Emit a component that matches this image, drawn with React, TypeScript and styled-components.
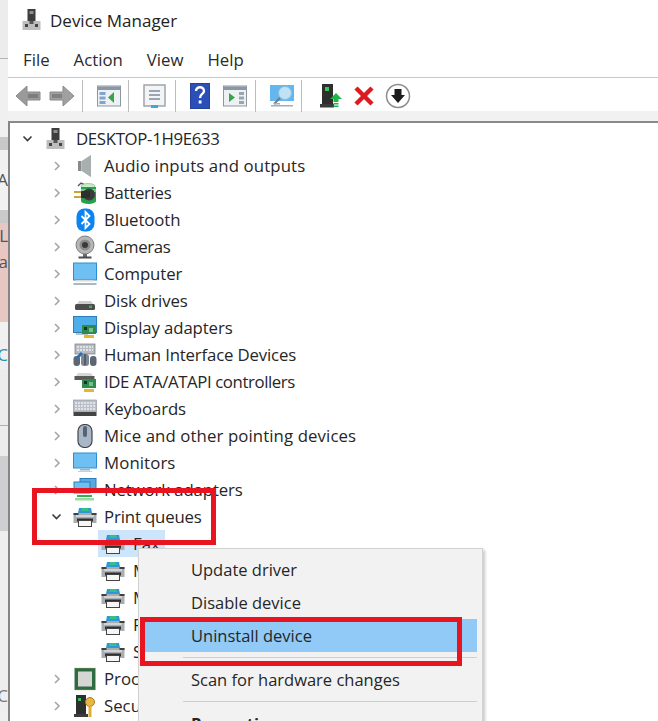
import React from "react";
import styled, { createGlobalStyle } from "styled-components";

const Global = createGlobalStyle`
  html, body { margin: 0; padding: 0; width: 658px; height: 721px; overflow: hidden; background: #fff; }
  body { font-family: "Open Sans", "Noto Sans", "Liberation Sans", sans-serif; color: #1c1c1c; }
  #root { width: 658px; height: 721px; }
  svg { filter: blur(0.3px); }
`;

const Page = styled.div`
  display: flex;
  width: 658px;
  height: 721px;
  overflow: hidden;
  position: relative;
  background: #fff;
`;

const LeftStrip = styled.div`
  width: 8px;
  flex: none;
  display: flex;
  flex-direction: column;
  background: #efefef;
  overflow: hidden;
`;

const StripBand = styled.div<{ $h: number; $bg?: string; $color?: string }>`
  height: ${(p) => p.$h}px;
  flex: none;
  background: ${(p) => p.$bg || "#efefef"};
  color: ${(p) => p.$color || "#555"};
  font-size: 17px;
  line-height: ${(p) => p.$h}px;
  white-space: nowrap;
  overflow: hidden;
  direction: rtl;
`;

const Win = styled.div`
  flex: 1;
  min-width: 0;
  display: flex;
  flex-direction: column;
`;

const TitleBar = styled.div`
  height: 40px;
  flex: none;
  display: flex;
  align-items: center;
  gap: 6px;
  padding: 0 0 0 12px;
  font-size: 17px;
  color: #222;
`;

const MenuBar = styled.div`
  height: 37px;
  box-sizing: content-box;
  flex: none;
  display: flex;
  align-items: center;
  gap: 24px;
  padding: 0 0 0 15px;
  font-size: 16.8px;
  color: #2a2a2a;
  border-bottom: 1px solid #c9c9c9;
  & > span { position: relative; top: 1px; }
`;

const Toolbar = styled.div`
  height: 43px;
  flex: none;
  display: flex;
  align-items: center;
  background: linear-gradient(#ffffff 0 76%, #f1f1f1 76%);
`;

const ToolGroup = styled.div<{ $gap?: number; $pl: number; $pr: number }>`
  display: flex;
  align-items: center;
  gap: ${(p) => p.$gap ?? 9}px;
  height: 32px;
  margin-top: -8px;
  padding: 0 ${(p) => p.$pr}px 0 ${(p) => p.$pl}px;
  & + & { border-left: 1px solid #bdbdbd; }
`;

const TreePane = styled.div`
  flex: 1;
  min-height: 0;
  border-left: 2px solid #858585;
  border-top: 2px solid #8a8a8a;
  overflow: hidden;
  padding-top: 2px;
`;

const Row = styled.div<{ $level: number }>`
  height: 27px;
  display: flex;
  align-items: center;
  padding-left: ${(p) => (p.$level === 0 ? 12 : p.$level === 1 ? 41 : 90)}px;
  font-size: 16.8px;
  white-space: nowrap;
  color: #262626;
`;

const Label = styled.span<{ $track?: number }>`
  letter-spacing: ${(p) => p.$track ?? 0}px;
`;

const Chevron = styled.span`
  width: 11px;
  height: 12px;
  flex: none;
  display: flex;
  align-items: center;
  justify-content: center;
`;

const IconSlot = styled.span<{ $level: number }>`
  width: 26px;
  height: 24px;
  flex: none;
  margin-left: ${(p) => (p.$level === 2 ? 0 : 10)}px;
  margin-right: ${(p) => (p.$level === 1 ? 6 : 7)}px;
  display: flex;
  align-items: center;
  justify-content: center;
`;

const Selected = styled.span`
  display: flex;
  align-items: center;
  height: 27px;
  margin-left: -2px;
  padding: 0 5px 0 2px;
  background: #cce5fb;
`;

const ContextMenu = styled.div`
  position: absolute;
  left: 138px;
  top: 548px;
  width: 345px;
  height: 190px;
  box-sizing: border-box;
  background: #f2f2f2;
  border: 1px solid #d2d2d2;
  box-shadow: 2px 2px 3px rgba(0, 0, 0, 0.22);
  padding: 4px 5px 0 6px;
  font-size: 16.5px;
  color: #262626;
`;

const MenuItem = styled.div<{ $active?: boolean; $bold?: boolean }>`
  height: 33px;
  line-height: 33px;
  padding-left: 46px;
  white-space: nowrap;
  background: ${(p) => (p.$active ? "#91c9f7" : "transparent")};
  font-weight: ${(p) => (p.$bold ? 700 : 400)};
`;

const MenuSep = styled.div`
  height: 1px;
  margin: 5px 0 5px 38px;
  background: #cfcfcf;
`;

const RedBox = styled.div<{ $l: number; $t: number; $w: number; $h: number }>`
  position: absolute;
  left: ${(p) => p.$l}px;
  top: ${(p) => p.$t}px;
  width: ${(p) => p.$w}px;
  height: ${(p) => p.$h}px;
  box-sizing: border-box;
  border: 5px solid #e8141f;
  pointer-events: none;
`;

const Svg = ({ w = 24, h = 24, children }: { w?: number; h?: number; children: React.ReactNode }) => (
  <svg width={w} height={h} viewBox={`0 0 ${w} ${h}`} fill="none">{children}</svg>
);

const ChevRight = () => (
  <svg width="8" height="12" viewBox="0 0 8 12" fill="none"><path d="M2 2l4 4-4 4" stroke="#a6a6a6" strokeWidth="1.6" /></svg>
);
const ChevDown = () => (
  <svg width="11" height="8" viewBox="0 0 11 8" fill="none"><path d="M1.5 1.5l4 4 4-4" stroke="#3a3a3a" strokeWidth="1.6" /></svg>
);

const PcIcon = () => (
  <Svg>
    <rect x="7.5" y="1" width="8" height="13" fill="#3d3d3d" />
    <rect x="9.5" y="3" width="4" height="3" fill="#8f8f8f" />
    <rect x="2.5" y="13" width="18" height="9" fill="#bdbdbd" />
    <rect x="5" y="16" width="3" height="3" fill="#444" />
    <rect x="15" y="16" width="3" height="3" fill="#444" />
    <rect x="9.5" y="13" width="4" height="3" fill="#555" />
  </Svg>
);
const AudioIcon = () => (
  <Svg>
    <path d="M5 7h4l9-6v22l-9-6H5z" fill="#bcc0c0" />
    <path d="M9 7l9-6v22l-9-6z" fill="#a9aeae" />
    <path d="M5 7h3v10H5z" fill="#868c8c" />
  </Svg>
);
const BatteryIcon = () => (
  <Svg>
    <path d="M5 5l3-3 4 2" stroke="#555" strokeWidth="1.4" />
    <ellipse cx="15" cy="5" rx="7" ry="2.5" fill="#c6ecc8" stroke="#7a9" strokeWidth=".6" />
    <path d="M8 6h15v14a7.500 3 0 0 1-15 0z" fill="#27a04a" />
    <path d="M8 8h15v3H8z" fill="#6fd18a" />
    <circle cx="16" cy="13.500" r="6" fill="#3b3b3b" />
    <rect x="8" y="10" width="9" height="7" rx="1" fill="#2e2e2e" />
    <path d="M1 11h7M1 16h7" stroke="#caa43c" strokeWidth="2" />
  </Svg>
);
const BluetoothIcon = () => (
  <Svg>
    <rect x="3.500" y="0.500" width="18" height="23" rx="8" fill="#0a84f0" />
    <path d="M8.500 8l8 8-4 4V4l4 4-8 8" stroke="#fff" strokeWidth="1.800" />
  </Svg>
);
const CameraIcon = () => (
  <Svg>
    <circle cx="12" cy="10" r="9" fill="#b6b6b6" stroke="#7d7d7d" />
    <circle cx="12" cy="10" r="5.500" fill="#8b8b8b" />
    <circle cx="12" cy="10" r="3" fill="#3a3a3a" />
    <rect x="10" y="19" width="4" height="3" fill="#6b6b6b" />
    <rect x="5.500" y="21.500" width="13" height="2" fill="#4d4d4d" />
  </Svg>
);
const ComputerIcon = () => (
  <Svg>
    <rect x="0.500" y="1" width="23" height="17" fill="#6ec0f2" stroke="#2d8fd0" />
    <rect x="3" y="18" width="18" height="1.500" fill="#d8d8d8" />
    <rect x="0.500" y="21" width="23" height="2" fill="#aab8c2" />
  </Svg>
);
const DiskIcon = () => (
  <Svg>
    <path d="M4 15l2-3h12l2 3z" fill="#cfcfcf" />
    <rect x="2" y="15" width="20" height="6" rx="1.500" fill="#4c4c4c" />
    <rect x="16" y="16.500" width="3" height="2.500" fill="#2fb34a" />
  </Svg>
);
const CardBits = ({ x = 9, y = 9 }: { x?: number; y?: number }) => (
  <>
    <rect x={x} y={y} width="14" height="9" fill="#2f8a4c" />
    <rect x={x + 2} y={y + 2} width="3" height="3" fill="#133" />
    <rect x={x + 7} y={y + 3} width="4" height="4" fill="#74c08c" />
    <rect x={x + 2} y={y + 10} width="10" height="3" fill="#e8b52c" />
  </>
);
const DisplayIcon = () => (
  <Svg>
    <rect x="0.500" y="0.500" width="23" height="16" fill="#4eaeea" stroke="#2a7fb8" />
    <rect x="3" y="17" width="12" height="2" fill="#b8c4cc" />
    <CardBits />
  </Svg>
);
const HidIcon = () => (
  <Svg>
    <rect x="2" y="1" width="20" height="10" fill="#b7bcc4" stroke="#777" strokeWidth=".7" />
    <path d="M4 4h16M4 7h16" stroke="#eceff2" strokeWidth="1.400" strokeDasharray="2 1" />
    <rect x="0.500" y="13" width="6.500" height="10" rx="3" fill="#5d6774" />
    <rect x="17" y="13" width="6.500" height="10" rx="3" fill="#5d6774" />
    <rect x="8" y="11" width="8" height="12" rx="3" fill="#7a8796" />
    <path d="M4 15l5-5" stroke="#2f6db0" strokeWidth="3" />
    <path d="M12 11v11" stroke="#333" strokeWidth="1" />
  </Svg>
);
const IdeIcon = () => (
  <Svg>
    <path d="M3 6l2-3h13l2 3z" fill="#d7d7d7" />
    <rect x="1.500" y="6" width="20" height="4" fill="#5a5a5a" />
    <CardBits />
  </Svg>
);
const KeyboardIcon = () => (
  <Svg>
    <rect x="0.500" y="3" width="23" height="12" fill="#b9bfc7" stroke="#8a9099" strokeWidth=".6" />
    <path d="M2 6h20M2 9h20M2 12h20" stroke="#eef0f3" strokeWidth="1.500" strokeDasharray="2 1" />
    <rect x="0.500" y="15" width="23" height="4" fill="#444" />
  </Svg>
);
const MouseIcon = () => (
  <Svg>
    <rect x="5" y="0.500" width="14" height="23" rx="6.500" fill="#a9b6c6" stroke="#3f4651" strokeWidth="1.200" />
    <rect x="10" y="2" width="4" height="11" rx="2" fill="#59626f" />
  </Svg>
);
const MonitorIcon = () => (
  <Svg>
    <rect x="0.500" y="2" width="23" height="15" fill="#6ec0f2" stroke="#2d8fd0" />
    <rect x="7" y="18" width="10" height="1.500" fill="#9fb0bc" />
    <rect x="5" y="20" width="14" height="1" fill="#c9d2d8" />
  </Svg>
);
const NetworkIcon = () => (
  <Svg>
    <rect x="7" y="0.500" width="16" height="11" fill="#5aa9e0" stroke="#2a7fb8" />
    <rect x="1" y="4" width="16" height="11" fill="#6ec0f2" stroke="#2a7fb8" />
    <rect x="4" y="17" width="15" height="2" fill="#2fb34a" />
    <rect x="2" y="20" width="19" height="2.500" fill="#9fd8a8" />
  </Svg>
);
const PrinterIcon = () => (
  <Svg>
    <path d="M6 3h12l1 5H5z" fill="#2f96d8" />
    <path d="M9 3h6l1 3H8z" fill="#35c08a" />
    <path d="M0.500 8h23v10H0.500z" fill="#a9adb0" />
    <path d="M0.500 8h5v2h-5zM18.500 8h5v2h-5z" fill="#3d4144" />
    <path d="M3 11h18" stroke="#dfe2e3" strokeWidth="1.500" />
    <rect x="4" y="13.500" width="16" height="3" fill="#2f2f2f" />
    <rect x="5.500" y="15.500" width="13" height="6" fill="#f6f6f6" stroke="#444" strokeWidth="1" />
  </Svg>
);
const CpuIcon = () => (
  <Svg>
    <rect x="1.500" y="1" width="21" height="22" fill="#2e6b42" stroke="#c7b67a" strokeWidth=".8" strokeDasharray="1 1" />
    <rect x="5" y="4.500" width="14" height="15" fill="#d6d6d4" />
  </Svg>
);
const SecurityIcon = () => (
  <Svg>
    <rect x="3" y="1" width="10" height="19" fill="#2f2f2f" />
    <rect x="5" y="4" width="3" height="3" fill="#33c05a" />
    <rect x="1" y="20" width="14" height="3" fill="#3c3c3c" />
    <circle cx="17" cy="8" r="4.500" fill="#e9b63f" stroke="#a87c1d" />
    <rect x="15.500" y="11" width="3" height="12" fill="#e2ab34" />
  </Svg>
);

const DisabledBack = () => (
  <svg width="26" height="24" viewBox="0 0 26 24" fill="none">
    <path d="M1 12L12 2v6h13v8H12v6z" fill="#9a9a9a" stroke="#8a8a8a" strokeLinejoin="round" />
    <rect x="13" y="10" width="10" height="4" fill="#7d7d7d" />
  </svg>
);
const DisabledForward = () => (
  <svg width="26" height="24" viewBox="0 0 26 24" fill="none">
    <path d="M25 12L14 2v6H1v8h13v6z" fill="#a0a0a0" stroke="#8a8a8a" strokeLinejoin="round" />
    <rect x="3" y="10" width="10" height="4" fill="#808080" />
  </svg>
);
const PaneIcon = () => (
  <Svg>
    <rect x="0.500" y="2" width="23" height="20" fill="#eef1f4" stroke="#8b97a3" />
    <rect x="1" y="2.500" width="22" height="3.500" fill="#8b97a3" />
    <rect x="2.500" y="8" width="6" height="3" fill="#7fa6cc" />
    <rect x="2.500" y="12.500" width="6" height="3" fill="#7fa6cc" />
    <rect x="2.500" y="17" width="6" height="3" fill="#7fa6cc" />
    <path d="M17 8v11l-6-5.500z" fill="#37a34a" />
  </Svg>
);
const PropsIcon = () => (
  <Svg>
    <rect x="1" y="1" width="21" height="21" fill="#f3f4f6" stroke="#9a9fa5" strokeWidth="1.400" />
    <path d="M6 7h11M6 11h11M6 15h11" stroke="#7e8b98" strokeWidth="1.300" />
    <rect x="8" y="21" width="7" height="3" fill="#3ea6d8" />
  </Svg>
);
const HelpIcon = () => (
  <svg width="20" height="26" viewBox="0 0 20 26">
    <rect x="0.500" y="0.500" width="19" height="25" fill="#2b4fb8" stroke="#27419a" />
    <path d="M6 8c0-5 8-5 8 0 0 3-4 3-4 7" stroke="#fff" strokeWidth="2.400" fill="none" />
    <rect x="8.700" y="17.500" width="2.800" height="3" fill="#fff" />
  </svg>
);
const PaneRightIcon = () => (
  <Svg>
    <rect x="0.500" y="2" width="23" height="20" fill="#eef1f4" stroke="#8b97a3" />
    <rect x="1" y="2.500" width="22" height="3.500" fill="#8b97a3" />
    <path d="M6 9v9l6-4.500z" fill="#37a34a" />
    <rect x="16" y="8" width="5" height="3" fill="#9aa5af" />
    <rect x="16" y="12.500" width="5" height="3" fill="#9aa5af" />
    <rect x="16" y="17" width="5" height="3" fill="#9aa5af" />
  </Svg>
);
const ScanIcon = () => (
  <svg width="26" height="26" viewBox="0 0 26 26" fill="none">
    <rect x="1" y="2" width="24" height="16" fill="#63b7ee" />
    <circle cx="16" cy="10" r="6.500" fill="#bfe2f7" stroke="#8bbfe0" />
    <path d="M11 15l-6 6" stroke="#6e7d88" strokeWidth="2" />
    <rect x="2" y="22" width="22" height="1.500" fill="#9fb0bc" />
    <rect x="5" y="20" width="6" height="1.500" fill="#9fb0bc" />
  </svg>
);
const UpdateIcon = () => (
  <svg width="24" height="26" viewBox="0 0 24 26" fill="none">
    <rect x="3" y="1" width="11" height="20" fill="#2e2e2e" />
    <rect x="6" y="4" width="4" height="4" fill="#35c65c" />
    <rect x="1" y="21" width="14" height="3.500" fill="#3a3a3a" />
    <path d="M17 10l6 6h-3.500v3h-5v-3H11z" fill="#20b54a" />
    <rect x="14.500" y="20" width="5" height="1.500" fill="#20b54a" />
    <rect x="14.500" y="22.500" width="5" height="1.500" fill="#20b54a" />
  </svg>
);
const RemoveIcon = () => (
  <svg width="22" height="22" viewBox="0 0 22 22" fill="none">
    <path d="M3 3l16 16M19 3L3 19" stroke="#dc1a22" strokeWidth="4.500" />
  </svg>
);
const DownloadIcon = () => (
  <svg width="26" height="26" viewBox="0 0 26 26" fill="none">
    <circle cx="13" cy="13" r="11.500" fill="#fff" stroke="#8d8d8d" strokeWidth="1.500" />
    <path d="M9.500 6h7v6H20l-7 8-7-8h3.500z" fill="#1c1c1c" />
  </svg>
);

type Item = { label: string; icon: React.ReactNode; track?: number };

const categoriesA: Item[] = [
  { label: "Audio inputs and outputs", icon: <AudioIcon />, track: 0.12 },
  { label: "Batteries", icon: <BatteryIcon />, track: -0.3 },
  { label: "Bluetooth", icon: <BluetoothIcon />, track: -0.1 },
  { label: "Cameras", icon: <CameraIcon />, track: -0.4 },
  { label: "Computer", icon: <ComputerIcon />, track: -0.1 },
  { label: "Disk drives", icon: <DiskIcon />, track: -0.1 },
  { label: "Display adapters", icon: <DisplayIcon />, track: -0.12 },
  { label: "Human Interface Devices", icon: <HidIcon />, track: -0.17 },
  { label: "IDE ATA/ATAPI controllers", icon: <IdeIcon />, track: -0.4 },
  { label: "Keyboards", icon: <KeyboardIcon />, track: -0.1 },
  { label: "Mice and other pointing devices", icon: <MouseIcon />, track: 0.1 },
  { label: "Monitors", icon: <MonitorIcon />, track: 0.1 },
  { label: "Network adapters", icon: <NetworkIcon />, track: -0.12 },
];

const printers = ["Microsoft Print to PDF", "Microsoft XPS Document Writer", "PDF", "Send To OneNote"];

const bands: { h: number; bg?: string; text?: string; color?: string }[] = [
  { h: 58, bg: "#ececec" },
  { h: 1, bg: "#b5b5b5" },
  { h: 78, bg: "#f0f0f0" },
  { h: 13, bg: "#c8c8c8" },
  { h: 60, bg: "#f1f1f1", text: "A" },
  { h: 13, bg: "#c9c9c9" },
  { h: 26, bg: "#e8c6c2", text: "L" },
  { h: 26, bg: "#e8c6c2", text: "a" },
  { h: 47, bg: "#e8c6c2" },
  { h: 18, bg: "#f1f1f1" },
  { h: 30, bg: "#efefef", text: "C", color: "#2a8fb0" },
  { h: 55, bg: "#ececec" },
  { h: 1, bg: "#b0b0b0" },
  { h: 30, bg: "#ededed" },
  { h: 75, bg: "#cfcfd2" },
  { h: 150, bg: "#efefef" },
  { h: 30, bg: "#eeeeee", text: "C", color: "#777" },
  { h: 10, bg: "#efefef" },
];

export default function App() {
  return (
    <Page>
      <Global />
      <LeftStrip>
        {bands.map((b, i) => (
          <StripBand key={i} $h={b.h} $bg={b.bg} $color={b.color}>{b.text}</StripBand>
        ))}
      </LeftStrip>
      <Win>
        <TitleBar><PcIcon /><span>Device Manager</span></TitleBar>
        <MenuBar>
          <span>File</span><span>Action</span><span>View</span><span>Help</span>
        </MenuBar>
        <Toolbar>
          <ToolGroup $gap={8} $pl={7} $pr={7}><DisabledBack /><DisabledForward /></ToolGroup>
          <ToolGroup $pl={14} $pr={7}><PaneIcon /></ToolGroup>
          <ToolGroup $pl={14} $pr={8}><PropsIcon /></ToolGroup>
          <ToolGroup $gap={13} $pl={14} $pr={8}><HelpIcon /><PaneRightIcon /></ToolGroup>
          <ToolGroup $pl={13} $pr={6}><ScanIcon /></ToolGroup>
          <ToolGroup $gap={10} $pl={17} $pr={0}><UpdateIcon /><RemoveIcon /><DownloadIcon /></ToolGroup>
        </Toolbar>
        <TreePane>
          <Row $level={0}>
            <Chevron><ChevDown /></Chevron>
            <IconSlot $level={0}><PcIcon /></IconSlot>
            <Label $track={-0.33}>DESKTOP-1H9E633</Label>
          </Row>
          {categoriesA.map((c) => (
            <Row $level={1} key={c.label}>
              <Chevron><ChevRight /></Chevron>
              <IconSlot $level={1}>{c.icon}</IconSlot>
              <Label $track={c.track}>{c.label}</Label>
            </Row>
          ))}
          <Row $level={1}>
            <Chevron><ChevDown /></Chevron>
            <IconSlot $level={1}><PrinterIcon /></IconSlot>
            <Label $track={-0.15}>Print queues</Label>
          </Row>
          <Row $level={2}>
            <Selected>
              <IconSlot $level={2}><PrinterIcon /></IconSlot>
              <Label>Fax</Label>
            </Selected>
          </Row>
          {printers.map((p) => (
            <Row $level={2} key={p}>
              <IconSlot $level={2}><PrinterIcon /></IconSlot>
              <Label>{p}</Label>
            </Row>
          ))}
          <Row $level={1}>
            <Chevron><ChevRight /></Chevron>
            <IconSlot $level={1}><CpuIcon /></IconSlot>
            <Label>Processors</Label>
          </Row>
          <Row $level={1}>
            <Chevron><ChevRight /></Chevron>
            <IconSlot $level={1}><SecurityIcon /></IconSlot>
            <Label>Security devices</Label>
          </Row>
        </TreePane>
      </Win>
      <ContextMenu>
        <MenuItem>Update driver</MenuItem>
        <MenuItem>Disable device</MenuItem>
        <MenuItem $active>Uninstall device</MenuItem>
        <MenuSep />
        <MenuItem>Scan for hardware changes</MenuItem>
        <MenuSep />
        <MenuItem $bold>Properties</MenuItem>
      </ContextMenu>
      <RedBox $l={32} $t={488} $w={184} $h={57} />
      <RedBox $l={140} $t={617} $w={322} $h={49} />
    </Page>
  );
}
